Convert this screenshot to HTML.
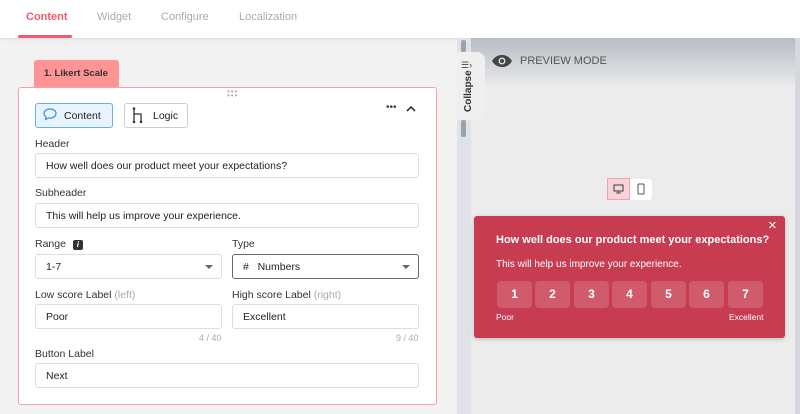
<!DOCTYPE html>
<html><head><style>
*{box-sizing:border-box;margin:0;padding:0}
body{width:800px;height:414px;overflow:hidden;font-family:"Liberation Sans",sans-serif;background:#f2f2f2;position:relative;font-size:11px;color:#222}
.abs{position:absolute}
.top{left:0;top:0;width:800px;height:38px;background:#fff;box-shadow:0 1px 3px rgba(0,0,0,.1)}
.tab{position:absolute;top:11px;font-size:11px;color:#aaa}
.card{left:18px;top:87px;width:419px;height:318px;background:#fff;border:1.5px solid #f9a0a0;border-radius:3px}
.lbl{position:absolute;left:35px;font-size:10.5px;color:#333}
.inp{position:absolute;height:25px;border:1px solid #ddd;border-radius:3px;background:#fff;font-size:10.5px;padding:6px 10px;color:#222}
.cnt{position:absolute;font-size:9px;color:#aaa}
.caret{position:absolute;right:8px;top:10px;width:0;height:0;border-left:4px solid transparent;border-right:4px solid transparent;border-top:4px solid #666}
.nb{position:absolute;top:281px;width:35px;height:27px;background:rgba(255,255,255,.16);border-radius:4px;color:#fff;font-weight:bold;font-size:12px;text-align:center;line-height:27px}
</style></head><body>
<div class="abs top">
<div class="tab" style="left:26px;color:#f05a6e;font-weight:bold">Content</div>
<div class="abs" style="left:18px;top:35px;width:54px;height:3px;background:#f05a6e;border-radius:2px"></div>
<div class="tab" style="left:97px">Widget</div>
<div class="tab" style="left:161px">Configure</div>
<div class="tab" style="left:239px">Localization</div>
</div>
<div class="abs" style="left:34px;top:60px;width:85px;height:27px;background:#ff9494;border-radius:3px 3px 0 0;font-size:9.5px;font-weight:bold;color:#333;padding:8px 0 0 10px;white-space:nowrap">1. Likert Scale</div>
<div class="abs card"></div>
<div class="abs" style="left:227px;top:90px;font-size:8px;color:#aaa;letter-spacing:1px;line-height:4px">•••<br>•••</div>
<div class="abs" style="left:35px;top:103px;width:78px;height:25px;background:#e8f4ff;border:1px solid #6aaee8;border-radius:3px;font-size:10.5px;padding:6px 0 0 28px">Content</div>
<svg class="abs" style="left:43px;top:108px" width="14" height="13" viewBox="0 0 14 13"><path d="M7 1C3.5 1 1 3 1 5.5c0 1.4.8 2.6 2 3.4L2.5 11.5 5.5 10c.5.1 1 .1 1.5.1 3.5 0 6-2 6-4.6S10.5 1 7 1z" fill="none" stroke="#3a8ee0" stroke-width="1.2"/></svg>
<div class="abs" style="left:124px;top:103px;width:64px;height:25px;border:1px solid #ccc;border-radius:3px;font-size:10.5px;padding:6px 0 0 28px">Logic</div>
<svg class="abs" style="left:132px;top:107px" width="12" height="16" viewBox="0 0 12 16"><path d="M2 1v14M2 7h7v8" fill="none" stroke="#333" stroke-width="1.3"/><circle cx="2" cy="15" r="1.3" fill="#333"/><circle cx="9" cy="15" r="1.3" fill="#333"/><circle cx="2" cy="1.5" r="1.3" fill="#333"/></svg>
<div class="abs" style="left:386px;top:102px;font-size:10px;color:#444">•••</div>
<svg class="abs" style="left:406px;top:105px" width="10" height="7"><path d="M1 6l4-4 4 4" fill="none" stroke="#222" stroke-width="1.5"/></svg>
<div class="lbl" style="top:138px">Header</div>
<div class="inp" style="left:35px;top:153px;width:384px">How well does our product meet your expectations?</div>
<div class="lbl" style="top:187px">Subheader</div>
<div class="inp" style="left:35px;top:203px;width:384px">This will help us improve your experience.</div>
<div class="lbl" style="top:238px">Range <span style="display:inline-block;width:10px;height:10px;background:#333;color:#fff;font-size:8px;text-align:center;line-height:10px;border-radius:2px;margin-left:4px;font-style:italic;font-weight:bold">i</span></div>
<div class="inp" style="left:35px;top:254px;width:187px">1-7<div class="caret"></div></div>
<div class="lbl" style="left:232px;top:238px">Type</div>
<div class="inp" style="left:232px;top:254px;width:187px;border-color:#666">#&nbsp;&nbsp;&nbsp;Numbers<div class="caret"></div></div>
<div class="lbl" style="top:289px">Low score Label <span style="color:#aaa">(left)</span></div>
<div class="inp" style="left:35px;top:304px;width:187px">Poor</div>
<div class="lbl" style="left:232px;top:289px">High score Label <span style="color:#aaa">(right)</span></div>
<div class="inp" style="left:232px;top:304px;width:187px">Excellent</div>
<div class="cnt" style="left:199px;top:333px">4 / 40</div>
<div class="cnt" style="left:396px;top:333px">9 / 40</div>
<div class="lbl" style="top:348px">Button Label</div>
<div class="inp" style="left:35px;top:363px;width:384px">Next</div>
<div class="abs" style="left:457px;top:38px;width:14px;height:376px;background:#dfe2e6"></div>
<div class="abs" style="left:461px;top:40px;width:5px;height:12px;background:#9aa3ad;border-radius:2px"></div>
<div class="abs" style="left:461px;top:120px;width:5px;height:17px;background:#9aa3ad;border-radius:2px"></div>
<div class="abs" style="left:471px;top:38px;width:324px;height:376px;background:#ececec"></div>
<div class="abs" style="left:471px;top:38px;width:324px;height:46px;background:linear-gradient(#b7bcc3,#e6e7e9)"></div>
<div class="abs" style="left:795px;top:38px;width:5px;height:376px;background:#d5d8dc"></div>
<div class="abs" style="left:457px;top:52px;width:28px;height:68px;background:#efefef;border-radius:0 8px 8px 0"></div>
<div class="abs" style="left:461px;top:60px;font-size:9px;color:#444">☰›</div>
<div class="abs" style="left:463px;top:112px;transform:rotate(-90deg);transform-origin:0 0;font-size:10px;font-weight:bold;color:#333">Collapse</div>
<svg class="abs" style="left:491px;top:54px" width="22" height="14" viewBox="0 0 22 14"><path d="M1 7C4 2 8 1 11 1s7 1 10 6c-3 5-7 6-10 6S4 12 1 7z" fill="#444"/><circle cx="11" cy="7" r="3.5" fill="#ddd"/><circle cx="11" cy="7" r="2" fill="#444"/></svg>
<div class="abs" style="left:520px;top:55px;font-size:11px;color:#555">PREVIEW MODE</div>
<div class="abs" style="left:607px;top:178px;width:23px;height:22px;background:#f9d3da;border:1px solid #f3a3b0"></div>
<div class="abs" style="left:630px;top:179px;width:22px;height:21px;background:#fff;border-radius:0 3px 3px 0"></div>
<svg class="abs" style="left:613px;top:184px" width="11" height="10"><rect x="1" y="1" width="9" height="6" fill="none" stroke="#555" stroke-width="1.2"/><path d="M5.5 7v2M3 9h5" stroke="#555"/></svg>
<svg class="abs" style="left:637px;top:183px" width="8" height="12"><rect x="1" y="1" width="6" height="10" rx="1" fill="none" stroke="#555"/></svg>
<div class="abs" style="left:474px;top:216px;width:311px;height:122px;background:#c83c52;border-radius:3px;box-shadow:0 1px 4px rgba(0,0,0,.2)"></div>
<div class="abs" style="left:768px;top:217px;color:#fff;font-size:15px">×</div>
<div class="abs" style="left:496px;top:234px;color:#fff;font-weight:bold;font-size:11px">How well does our product meet your expectations?</div>
<div class="abs" style="left:496px;top:259px;color:#fff;font-size:10px">This will help us improve your experience.</div>
<div class="nb" style="left:497px">1</div><div class="nb" style="left:535px">2</div><div class="nb" style="left:574px">3</div><div class="nb" style="left:612px">4</div><div class="nb" style="left:651px">5</div><div class="nb" style="left:689px">6</div><div class="nb" style="left:728px">7</div>
<div class="abs" style="left:496px;top:312px;color:#fff;font-size:8.5px">Poor</div>
<div class="abs" style="left:729px;top:312px;color:#fff;font-size:8.5px">Excellent</div>
</body></html>
